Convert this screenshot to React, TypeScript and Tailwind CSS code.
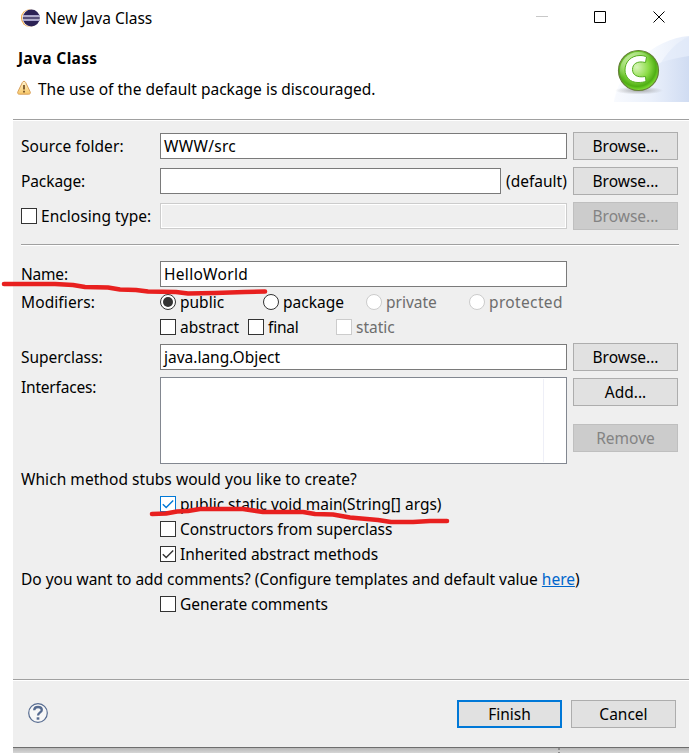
import type { ReactNode } from "react";

const modifiers = [
  { label: "public", checked: true, disabled: false },
  { label: "package", checked: false, disabled: false },
  { label: "private", checked: false, disabled: true },
  { label: "protected", checked: false, disabled: true, textClass: "tracking-[0.35px]" },
];

function Text({ children, className = "" }: { children: ReactNode; className?: string }) {
  return <span className={`whitespace-nowrap ${className}`}>{children}</span>;
}

function Button({ label, disabled, primary }: { label: string; disabled?: boolean; primary?: boolean }) {
  const look = disabled
    ? "border border-[#bfbfbf] bg-[#cccccc] text-[#838383]"
    : primary
      ? "border-2 border-[#0078d7] bg-[#e1e1e1]"
      : "border border-[#adadad] bg-[#e1e1e1]";
  return (
    <button className={`flex h-7 w-[105px] shrink-0 items-center justify-center ${look}`}>
      <Text>{label}</Text>
    </button>
  );
}

type CheckProps = { label: string; checked?: boolean; disabled?: boolean; hot?: boolean; textClass?: string };

function Check({ label, checked, disabled, hot, textClass }: CheckProps) {
  const border = disabled ? "border-[#cccccc]" : hot ? "border-[#0078d7]" : "border-[#333333]";
  return (
    <label className={`flex items-center gap-1 ${disabled ? "text-[#6d6d6d]" : ""}`}>
      <span className={`flex size-4 shrink-0 items-center justify-center border bg-white ${border}`}>
        {checked && (
          <svg viewBox="0 0 14 14" className="size-3.5 shrink-0" fill="none" stroke={hot ? "#0078d7" : "#333"} strokeWidth="1.4">
            <path d="M1.8 7.2 5.2 10.6 12.2 3.6" />
          </svg>
        )}
      </span>
      <Text className={textClass}>{label}</Text>
    </label>
  );
}

function Radio({ label, checked, disabled, textClass }: CheckProps) {
  return (
    <label className={`flex w-[103px] items-center gap-1 ${disabled ? "text-[#6d6d6d]" : ""}`}>
      <span
        className={`flex size-4 shrink-0 items-center justify-center rounded-full border bg-white ${
          disabled ? "border-[#cccccc]" : "border-[#333333]"
        }`}
      >
        {checked && <span className="size-2.5 rounded-full bg-[#333333]" />}
      </span>
      <Text className={textClass}>{label}</Text>
    </label>
  );
}

function Field({ value, className = "" }: { value?: string; className?: string }) {
  return (
    <div className={`flex h-[26px] items-center border border-[#7a7a7a] bg-white pl-[3px] ${className}`}>
      <Text>{value}</Text>
    </div>
  );
}

function Row({ label, children }: { label: ReactNode; children: ReactNode }) {
  return (
    <div className="flex h-7 items-center">
      <div className="w-[139px] shrink-0">{label}</div>
      {children}
    </div>
  );
}

function EclipseIcon() {
  return (
    <svg viewBox="0 0 20 20" className="size-5">
      <circle cx="9.7" cy="10" r="8.7" fill="#f0a33c" />
      <circle cx="10.9" cy="10" r="8.8" fill="#fff" />
      <circle cx="11.3" cy="10" r="8.5" fill="#2c2255" />
      <path d="M3 7.5h16.6M2.6 12.5h17" stroke="#a9a4cc" strokeWidth="1" />
      <path d="M2.8 8.800h17M2.8 11.200h17" stroke="#dcdaee" strokeWidth="1.100" />
    </svg>
  );
}

function WarningIcon() {
  return (
    <svg viewBox="0 0 16 16" className="-mt-0.5 size-4">
      <defs>
        <linearGradient id="warn" x2="0" y2="1">
          <stop stopColor="#fff3cf" />
          <stop offset="1" stopColor="#f7c766" />
        </linearGradient>
      </defs>
      <path d="M8 1.3c.8 0 1.200.4 1.600 1.100l4.500 9.300c.7 1.500 0 2.500-1.400 2.500H3.300c-1.400 0-2.100-1-1.400-2.500l4.500-9.300C6.800 1.700 7.200 1.300 8 1.300Z" fill="url(#warn)" stroke="#d9a05a" />
      <path d="M8 5v4.500M8 10.800v1.600" stroke="#5d3a12" strokeWidth="1.500" />
    </svg>
  );
}

function ClassBanner() {
  return (
    <svg viewBox="0 0 75 66" className="h-[66px] w-[75px]">
      <defs>
        <linearGradient id="lobe">
          <stop stopColor="#fafcff" />
          <stop offset=".5" stopColor="#f6f9fe" />
          <stop offset="1" stopColor="#e6edfa" />
        </linearGradient>
        <linearGradient id="sky">
          <stop stopColor="#f8fafe" />
          <stop offset=".5" stopColor="#eaf0fb" />
          <stop offset="1" stopColor="#d0dcf2" />
        </linearGradient>
        <radialGradient id="ball" cx=".46" cy=".42" r=".6">
          <stop stopColor="#d8f5b8" />
          <stop offset=".5" stopColor="#8bdc45" />
          <stop offset=".8" stopColor="#4fae14" />
          <stop offset="1" stopColor="#8df03a" />
        </radialGradient>
        <linearGradient id="gloss" x2=".7" y2="1">
          <stop stopColor="#fff" stopOpacity=".7" />
          <stop offset=".5" stopColor="#fff" stopOpacity="0" />
        </linearGradient>
        <radialGradient id="shade">
          <stop stopColor="#777" stopOpacity=".6" />
          <stop offset="1" stopColor="#777" stopOpacity="0" />
        </radialGradient>
      </defs>
      <path d="M0 66C2 38 40 2 75 0v66Z" fill="url(#lobe)" />
      <path d="M44 32C52 17 63 5 75 1v65H44Z" fill="#dce6f8" opacity=".5" />
      <path d="M0 66C3 44 34 26 75 20v46Z" fill="url(#sky)" />
      <ellipse cx="25" cy="54.500" rx="24" ry="4" fill="url(#shade)" />
      <circle cx="24.500" cy="34.500" r="20" fill="url(#ball)" stroke="#66803a" strokeWidth="1.200" />
      <circle cx="24.500" cy="34.500" r="18.500" fill="url(#gloss)" />
      <path
        d="M32.500 21C31 20 29 19.500 26 19.500C17 19.500 11 26 11 34C11 41 16 46.500 24 46.500C27.500 46.500 30 46 32 45.500L31.500 40.500C22.500 42 18.500 38.500 18.500 33.500C18.500 28 23 24.500 31.500 26.500Z"
        fill="#fff"
        stroke="#55ad20"
      />
    </svg>
  );
}

function HelpIcon() {
  return (
    <svg viewBox="0 0 20 20" className="-mt-0.5 size-5" fill="none" stroke="#566b90">
      <circle cx="10" cy="10" r="9.300" fill="#f7f7f7" strokeWidth="1.200" />
      <path d="M6.200 7.200C6.300 4.800 7.800 4 10 4C12.300 4 13.800 5 13.800 6.900C13.800 9.300 10 9.400 10 12.500" strokeWidth="2.300" />
      <path d="M10 14.300v2.400" strokeWidth="2.700" />
    </svg>
  );
}

function Divider({ className = "" }: { className?: string }) {
  return <div className={`h-0.5 shrink-0 border-t border-[#a0a0a0] bg-white ${className}`} />;
}

function RedMarks() {
  return (
    <svg viewBox="0 0 689 753" className="pointer-events-none absolute inset-0 h-[753px] w-[689px]" fill="none" stroke="#e8201f" strokeWidth="4.600" strokeLinecap="round" strokeLinejoin="round">
      <path d="M4 284L55 284L73 285L85 287L108 287.500L120 289.500L136 290L148 291.500L176 292L188 293.500L215 293L245 292L265 291.500" />
      <path d="M152 514L166 513.500L177 511.500L188 511L200 509L243 509L263 512L303 512L315 514L333 514.500L350 517.500L378 520L391 522L413 522L430 521L447 521" />
    </svg>
  );
}

export default function App() {
  return (
    <main className="relative flex h-[753px] w-[689px] flex-col overflow-hidden bg-white font-['Noto_Sans',sans-serif] text-[15.5px] leading-5 text-black">
      <header className="flex h-[119px] shrink-0 justify-between">
        <div className="flex flex-col">
          <div className="flex h-[35px] items-center gap-[5px] pl-5">
            <EclipseIcon />
            <Text>New Java Class</Text>
          </div>
          <h1 className="mt-[13px] pl-[18px] font-bold tracking-[0.35px]">
            <Text>Java Class</Text>
          </h1>
          <div className="mt-[11px] flex items-center gap-1.5 pl-4">
            <WarningIcon />
            <Text>The use of the default package is discouraged.</Text>
          </div>
        </div>
        <div className="flex flex-col items-end">
          <svg viewBox="0 0 153 36" className="h-9 w-[153px]" fill="none" stroke="#000">
            <path d="M0 16.500h12" stroke="#c8c8c8" />
            <path d="M58.500 11.500h11v11h-11z" />
            <path d="m117.500 11.500 11 11m0-11-11 11" />
          </svg>
          <ClassBanner />
        </div>
      </header>

      <div className="ml-[13px] flex h-[628px] shrink-0 flex-col bg-[#efefef]">
        <Divider />
        <div className="flex h-[558px] shrink-0 flex-col pt-[11px] pr-2.5 pl-2">
          <section className="flex flex-col gap-[7px]">
            <Row label={<Text className="tracking-[0.1px]">Source folder:</Text>}>
              <Field value="WWW/src" className="mr-1.5 w-[407px] tracking-[0.3px]" />
              <Button label="Browse..." />
            </Row>
            <Row label={<Text className="tracking-[-0.1px]">Package:</Text>}>
              <Field className="w-[341px]" />
              <Text className="w-[72px] pl-[5px]">(default)</Text>
              <Button label="Browse..." />
            </Row>
            <Row label={<Check label="Enclosing type:" textClass="tracking-[0.05px]" />}>
              <div className="mr-1.5 h-[26px] w-[407px] border border-[#cccccc] bg-[#efefef] shadow-[inset_0_0_0_1px_#fff]" />
              <Button label="Browse..." disabled />
            </Row>
          </section>

          <Divider className="mt-3.5 mb-3.5" />

          <Row label={<Text className="tracking-[-0.2px]">Name:</Text>}>
            <Field value="HelloWorld" className="w-[407px] tracking-[0.3px]" />
          </Row>
          <div className="mt-0.5 flex h-6 shrink-0 items-center">
            <Text className="w-[139px] tracking-[0.1px]">Modifiers:</Text>
            {modifiers.map((m) => (
              <Radio key={m.label} {...m} />
            ))}
          </div>
          <div className="mt-px mb-1 grid h-6 shrink-0 grid-cols-[88px_88px_88px] items-center pl-[139px]">
            <Check label="abstract" />
            <Check label="final" textClass="tracking-[-0.2px]" />
            <Check label="static" disabled />
          </div>
          <Row label={<Text>Superclass:</Text>}>
            <Field value="java.lang.Object" className="mr-1.5 w-[407px]" />
            <Button label="Browse..." />
          </Row>

          <div className="mt-1.5 flex h-[87px] shrink-0">
            <Text className="w-[139px] tracking-[-0.2px]">Interfaces:</Text>
            <div className="mr-1.5 flex w-[407px] border border-[#828790] bg-white py-px">
              <div className="w-[383px] border-r border-[#eeeff7]" />
            </div>
            <div className="flex flex-col gap-[18px] pt-px">
              <Button label="Add..." />
              <Button label="Remove" disabled />
            </div>
          </div>

          <section className="mt-[3px] flex flex-col gap-px">
            <div className="flex h-6 items-center">
              <Text className="tracking-[0.05px]">Which method stubs would you like to create?</Text>
            </div>
            <div className="flex h-6 items-center pl-[139px]">
              <Check label="public static void main(String[] args)" checked hot />
            </div>
            <div className="flex h-6 items-center pl-[139px]">
              <Check label="Constructors from superclass" textClass="tracking-[-0.05px]" />
            </div>
            <div className="flex h-6 items-center pl-[139px]">
              <Check label="Inherited abstract methods" checked textClass="tracking-[-0.05px]" />
            </div>
            <div className="flex h-6 items-center">
              <Text className="tracking-[-0.02px]">
                Do you want to add comments? (Configure templates and default value{" "}
                <a className="text-[#0066cc] underline">here</a>)
              </Text>
            </div>
            <div className="flex h-6 items-center pl-[139px]">
              <Check label="Generate comments" textClass="tracking-[-0.05px]" />
            </div>
          </section>
        </div>

        <Divider />
        <footer className="flex h-[66px] items-center justify-between pr-[13px] pl-[15px]">
          <HelpIcon />
          <div className="flex gap-[9px]">
            <Button label="Finish" primary />
            <Button label="Cancel" />
          </div>
        </footer>
      </div>
      <div className="ml-[13px] flex h-1.5 justify-end border-t border-[#6e6e6e] bg-linear-to-b from-[#b8b8b8] to-[#d6d6d6] pr-[129px]">
        <div className="h-full w-0.5 border-t-2 border-b border-[#8c8c8c]" />
      </div>
      <RedMarks />
    </main>
  );
}
